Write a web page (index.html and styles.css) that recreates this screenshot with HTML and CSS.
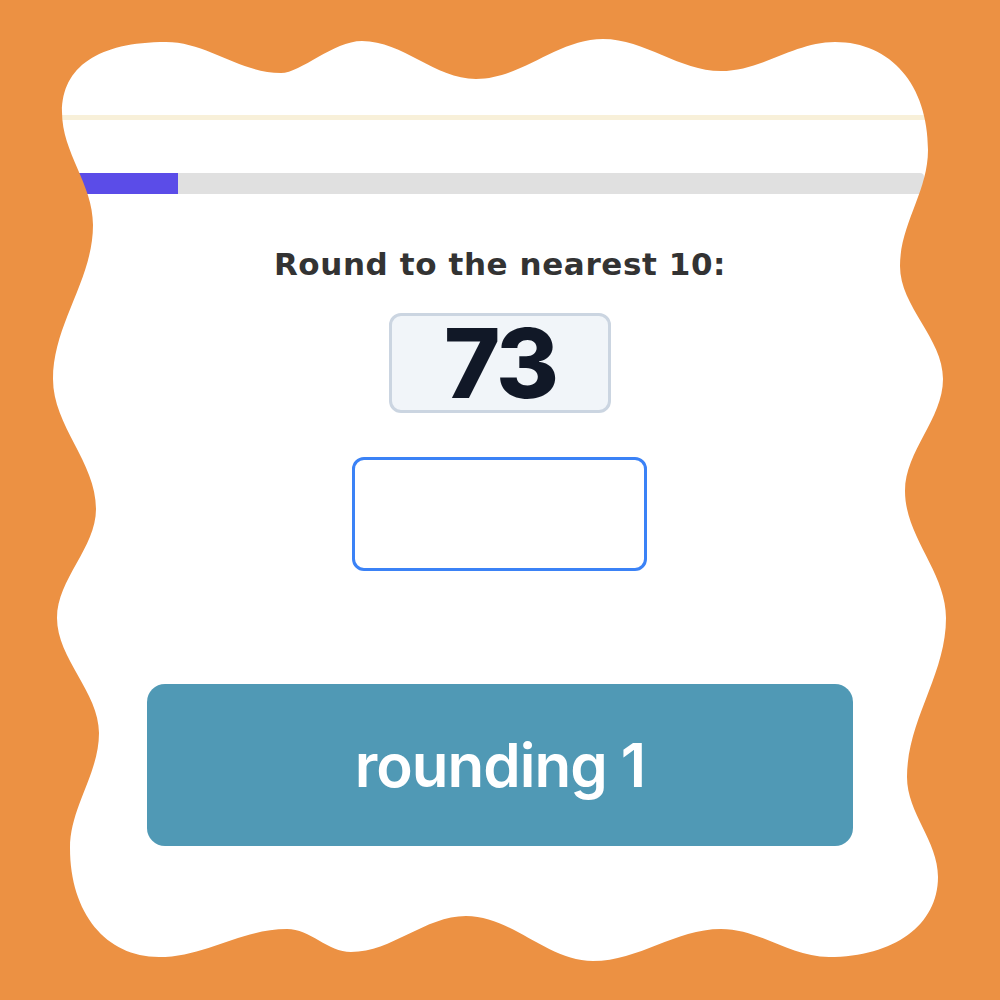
FILE: index.html
```html
<!DOCTYPE html>
<html lang="en">

<head>
  <meta charset="UTF-8">
  <meta name="viewport" content="width=device-width, initial-scale=1.0">
  <title>Rounding 1</title>
  <link rel="stylesheet" href="styles.css">
</head>

<body>
  <header class="top-bar"></header>

  <main class="quiz">
    <div class="progress">
      <div class="progress-fill" style="width: 13.4%"></div>
    </div>

    <section class="question">
      <h2 class="prompt">Round to the nearest 10:</h2>
      <div class="number-card">73</div>
      <input class="answer" type="text" aria-label="Your answer">
    </section>

    <button class="title-button">rounding 1</button>
  </main>

  <!-- Wavy orange frame drawn over the page -->
  <svg class="frame" viewBox="0 0 1000 1000" aria-hidden="true">
    <path fill-rule="evenodd" d="M0,0 H1000 V1000 H0 Z
      M166,42
      C207,42 240,73 281,73
      C301,73 333,41 362,41
      C403,41 435,79 476,79
      C522,79 557,39 603,39
      C645,39 679,71 721,71
      C762,71 794,42 835,42
      C891,42 928,85 928,150
      C928,192 900,224 900,266
      C900,307 943,338 943,379
      C943,419 905,451 905,491
      C905,537 946,572 946,618
      C946,675 907,720 907,777
      C907,813 938,841 938,877
      C938,925 894,957 829,957
      C790,957 760,929 721,929
      C675,929 639,961 593,961
      C547,961 512,916 466,916
      C425,916 392,952 351,952
      C328,952 310,929 287,929
      C241,929 205,957 159,957
      C106,957 70,913 70,848
      C70,807 99,774 99,733
      C99,692 57,659 57,618
      C57,579 96,548 96,509
      C96,462 53,426 53,379
      C53,324 93,280 93,225
      C93,184 62,153 62,112
      C62,67 98,42 166,42 Z" />
  </svg>
</body>

</html>
```

FILE: styles.css
```css
body {
  margin: 0;
  padding: 0;
  background-color: #fff;
  font-family: Inter, "Noto Sans", sans-serif;
  color: #333;
}

.top-bar {
  height: 115px;
  border-bottom: 5px solid #f8f0d9;
}

.quiz {
  display: flex;
  flex-direction: column;
  align-items: center;
}

.progress {
  align-self: stretch;
  margin: 53px 76px 0 62px;
  height: 21px;
  background-color: #e0e0e0;
  border-radius: 0 4px 4px 0;
  overflow: hidden;
}

.progress-fill {
  height: 100%;
  background-color: #5b4ce8;
}

.question {
  display: flex;
  flex-direction: column;
  align-items: center;
}

.prompt {
  margin: 52px 0 0;
  font-family: "DejaVu Sans", sans-serif;
  font-size: 31px;
  line-height: 36px;
  font-weight: 700;
  letter-spacing: 0.6px;
  color: #333;
}

.number-card {
  margin-top: 31px;
  box-sizing: border-box;
  width: 222px;
  height: 100px;
  display: flex;
  align-items: center;
  justify-content: center;
  background-color: #f1f5f9;
  border: 3px solid #cbd5e1;
  border-radius: 12px;
  font-size: 96px;
  line-height: 1;
  font-weight: 800;
  letter-spacing: -3px;
  color: #111827;
}

.answer {
  margin-top: 44px;
  box-sizing: border-box;
  width: 295px;
  height: 114px;
  border: 3px solid #3b82f6;
  border-radius: 12px;
  outline: none;
  background: #fff;
  font-family: inherit;
  font-size: 40px;
  text-align: center;
}

.title-button {
  margin-top: 113px;
  width: 706px;
  height: 162px;
  border: none;
  border-radius: 18px;
  background-color: #5099b5;
  color: #fff;
  font-family: Inter, "Noto Sans", sans-serif;
  font-size: 60px;
  font-weight: 600;
  letter-spacing: -1px;
  cursor: pointer;
}

.frame {
  position: fixed;
  top: 0;
  left: 0;
  width: 1000px;
  height: 1000px;
  pointer-events: none;
  fill: #ec9143;
}
```
